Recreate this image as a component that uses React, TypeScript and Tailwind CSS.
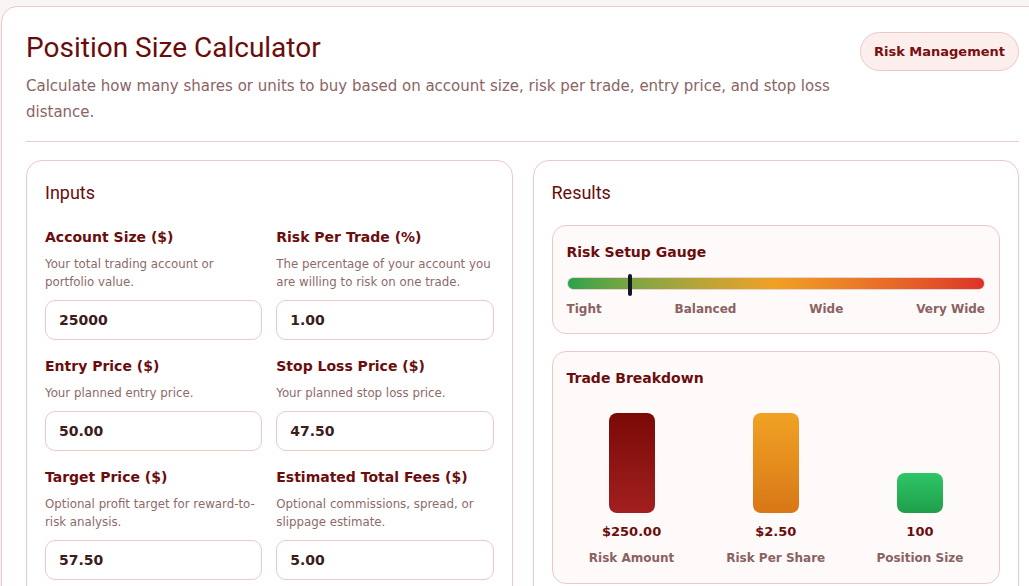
import React from 'react';

type Field = {
  label: string;
  help: string;
  value: string;
};

const fields: Field[] = [
  { label: 'Account Size ($)', help: 'Your total trading account or portfolio value.', value: '25000' },
  { label: 'Risk Per Trade (%)', help: 'The percentage of your account you are willing to risk on one trade.', value: '1.00' },
  { label: 'Entry Price ($)', help: 'Your planned entry price.', value: '50.00' },
  { label: 'Stop Loss Price ($)', help: 'Your planned stop loss price.', value: '47.50' },
  { label: 'Target Price ($)', help: 'Optional profit target for reward-to-risk analysis.', value: '57.50' },
  { label: 'Estimated Total Fees ($)', help: 'Optional commissions, spread, or slippage estimate.', value: '5.00' },
];

const bars = [
  { value: '$250.00', label: 'Risk Amount', height: 100, color: 'bg-gradient-to-b from-[#7a0905] to-[#a21f1f]' },
  { value: '$2.50', label: 'Risk Per Share', height: 100, color: 'bg-gradient-to-b from-[#f1a225] to-[#d87716]' },
  { value: '100', label: 'Position Size', height: 40, color: 'bg-gradient-to-b from-[#2ec666] to-[#1f9f4b]' },
];

function InputField({ label, help, value }: Field) {
  return (
    <div className="flex flex-col">
      <label className="text-[14px] leading-5 font-bold text-[#6b0d0d]">{label}</label>
      <p className="mt-2 text-[11.8px] leading-[18px] text-[#8d6a6a]">{help}</p>
      <input
        defaultValue={value}
        className="mt-[9px] h-10 w-full rounded-[10px] border border-[#ebc9c9] bg-white px-[13px] text-[14px] font-bold text-[#3b1d1d] outline-none"
      />
    </div>
  );
}

export default function App() {
  return (
    <div className="h-[586px] w-full overflow-hidden bg-[#f8f5f4] pt-[6px] font-['DejaVu_Sans',sans-serif]">
      <div className="ml-px w-[1043px] rounded-2xl border border-[#ebcaca] bg-white px-6 pt-6 pb-6">
        {/* header */}
        <div className="flex items-start justify-between gap-6 border-b border-[#e9cccc] pb-4">
          <div>
            <h1 className="font-['Roboto',sans-serif] text-[28px] leading-[33px] text-[#6a0c0c]">
              Position Size Calculator
            </h1>
            <p className="mt-[9px] text-[15px] leading-[26px] text-[#8a6464]">
              Calculate how many shares or units to buy based on account size, risk per trade, entry price, and stop loss distance.
            </p>
          </div>
          <button className="mt-px shrink-0 rounded-full border border-[#ebc8c8] bg-[#fdeeee] px-[13px] py-[10px] text-[13px] leading-[17px] font-bold text-[#7a0f0f]">
            Risk Management
          </button>
        </div>

        <div className="mt-[18px] grid grid-cols-2 gap-5">
          {/* inputs */}
          <div className="rounded-2xl border border-[#ecc9c9] bg-white p-[18px]">
            <h2 className="font-['Roboto',sans-serif] text-[18px] leading-7 text-[#6a0c0c]">Inputs</h2>
            <div className="mt-5 grid grid-cols-2 gap-x-[14px] gap-y-4">
              {fields.map((f) => (
                <InputField key={f.label} {...f} />
              ))}
            </div>
          </div>

          {/* results */}
          <div className="rounded-2xl border border-[#ecc9c9] bg-white p-[18px]">
            <h2 className="font-['Roboto',sans-serif] text-[18px] leading-7 text-[#6a0c0c]">Results</h2>

            <div className="mt-[18px] rounded-[14px] border border-[#ecc9c9] bg-[#fffafa] px-[14px] pt-4 pb-[14px]">
              <h3 className="text-[14px] leading-5 font-bold text-[#6b0d0d]">Risk Setup Gauge</h3>
              <div className="relative mt-[15px] h-[13px] rounded-full border border-[#ead3d3] bg-gradient-to-r from-[#22a34a] via-[#f0a024] to-[#dc3228]">
                <div className="absolute top-[-4px] left-[15%] h-[22px] w-1 -translate-x-1/2 rounded-full bg-[#111827]" />
              </div>
              <div className="mt-[9px] flex justify-between text-[12px] leading-5 font-bold text-[#8a6262]">
                <span>Tight</span>
                <span>Balanced</span>
                <span>Wide</span>
                <span>Very Wide</span>
              </div>
            </div>

            <div className="mt-[17px] rounded-[14px] border border-[#ecc9c9] bg-[#fffafa] px-[14px] pt-4 pb-[15px]">
              <h3 className="text-[14px] leading-5 font-bold text-[#6b0d0d]">Trade Breakdown</h3>
              <div className="mt-[25px] grid grid-cols-3 gap-[14px]">
                {bars.map((b) => (
                  <div key={b.label} className="flex flex-col items-center">
                    <div className="flex h-[100px] items-end">
                      <div className={`w-[46px] rounded-lg ${b.color}`} style={{ height: b.height }} />
                    </div>
                    <div className="mt-[9px] text-[13px] leading-5 font-bold text-[#6b0d0d]">{b.value}</div>
                    <div className="mt-[6px] text-[12px] leading-5 font-bold text-[#8a6262]">{b.label}</div>
                  </div>
                ))}
              </div>
            </div>
          </div>
        </div>
      </div>
    </div>
  );
}
